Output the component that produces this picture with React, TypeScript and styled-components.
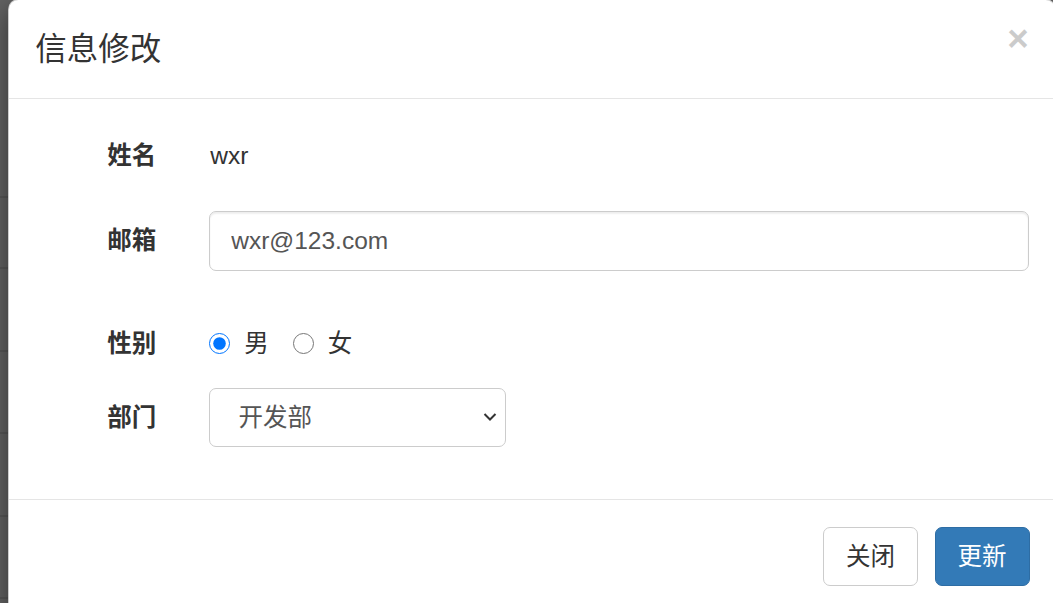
import React from "react";
import styled, { createGlobalStyle } from "styled-components";

const GlobalStyle = createGlobalStyle`
  html, body { margin: 0; padding: 0; }
  body {
    font-family: "Liberation Sans", "Noto Sans CJK SC", sans-serif;
    color: #333;
    overflow: hidden;
  }
  * { box-sizing: border-box; }
`;

const Backdrop = styled.div`
  display: flex;
  align-items: flex-start;
  width: 1053px;
  height: 603px;
  overflow: hidden;
  background: #636363;
`;

const PageBehind = styled.div`
  flex: 0 0 8px;
  display: flex;
  flex-direction: column;
  height: 603px;
`;

const BehindRow = styled.div<{ $h: number }>`
  flex: 0 0 ${(p) => p.$h}px;
  border-bottom: 2px solid #585858;
`;

const Modal = styled.div`
  flex: 0 0 1048px;
  margin-top: -1px;
  background: #fff;
  border: 1.75px solid rgba(0, 0, 0, 0.2);
  border-radius: 10.5px;
  box-shadow: 0 8.75px 26.25px rgba(0, 0, 0, 0.5);
  display: flex;
  flex-direction: column;
`;

const Header = styled.div`
  display: flex;
  align-items: flex-start;
  justify-content: space-between;
  padding: 26.75px 26.25px 26.25px;
  border-bottom: 1.75px solid #e5e5e5;
`;

const Title = styled.h4`
  margin: 0;
  font-size: 31.5px;
  font-weight: 400;
  line-height: 45px;
  color: #333;
`;

const Close = styled.button`
  margin-top: -6px;
  padding: 0;
  border: 0;
  background: transparent;
  font-family: "Liberation Sans", sans-serif;
  font-size: 36.75px;
  font-weight: 700;
  line-height: 1;
  color: #000;
  opacity: 0.2;
  cursor: pointer;
`;

const Body = styled.div`
  display: flex;
  flex-direction: column;
  padding: 26.25px 26.25px 52px;
`;

const FormRow = styled.div<{ $mt?: number }>`
  display: flex;
  align-items: center;
  min-height: 59.5px;
  margin-top: ${(p) => p.$mt ?? 0}px;
`;

const Label = styled.label`
  flex: 0 0 121px;
  margin-right: 53px;
  text-align: right;
  font-size: 24.5px;
  font-weight: 700;
  line-height: 35px;
  color: #333;
`;

const StaticText = styled.div`
  padding-left: 1px;
  font-size: 24.5px;
  line-height: 35px;
  color: #333;
`;

const TextInput = styled.input`
  flex: 1;
  height: 59.5px;
  padding: 10.5px 21px;
  font-family: inherit;
  font-size: 24.5px;
  line-height: 35px;
  color: #555;
  background: #fff;
  border: 1.75px solid #ccc;
  border-radius: 7px;
  box-shadow: inset 0 1.75px 1.75px rgba(0, 0, 0, 0.075);
  outline: none;
`;

const RadioGroup = styled.div`
  display: flex;
  align-items: center;
  gap: 24px;
`;

const RadioLabel = styled.label`
  display: inline-flex;
  align-items: center;
  gap: 14px;
  font-size: 24.5px;
  line-height: 35px;
  color: #333;
`;

const Radio = styled.input`
  width: 21px;
  height: 21px;
  margin: 0;
`;

const SelectWrap = styled.div`
  position: relative;
  width: 297px;
  height: 59.5px;
`;

const Select = styled.select`
  appearance: none;
  width: 100%;
  height: 100%;
  padding: 0 40px 0 28.25px;
  font-family: inherit;
  font-size: 24.5px;
  color: #555;
  background: #fff;
  border: 1.75px solid #ccc;
  border-radius: 7px;
  outline: none;
`;

const Chevron = styled.svg`
  position: absolute;
  left: 274px;
  top: 24px;
  pointer-events: none;
`;

const Footer = styled.div`
  display: flex;
  justify-content: flex-end;
  gap: 16.5px;
  padding: 26.25px 25.5px 26.25px 26.25px;
  border-top: 1.75px solid #e5e5e5;
`;

const Button = styled.button<{ $primary?: boolean }>`
  height: 59.5px;
  padding: 10.5px 22px;
  font-family: inherit;
  font-size: 24.5px;
  line-height: 35px;
  border-radius: 7px;
  border: 1.75px solid ${(p) => (p.$primary ? "#2e6da4" : "#ccc")};
  background: ${(p) => (p.$primary ? "#337ab7" : "#fff")};
  color: ${(p) => (p.$primary ? "#fff" : "#333")};
  cursor: pointer;
`;

const behindRows = [198, 71, 83, 82, 83, 82, 20];

export default function App() {
  return (
    <>
      <GlobalStyle />
      <Backdrop>
        <PageBehind>
          {behindRows.map((h, i) => (
            <BehindRow key={i} $h={h} />
          ))}
        </PageBehind>
        <Modal>
          <Header>
            <Title>信息修改</Title>
            <Close aria-label="Close">×</Close>
          </Header>
          <Body>
            <FormRow>
              <Label>姓名</Label>
              <StaticText>wxr</StaticText>
            </FormRow>
            <FormRow $mt={26.25}>
              <Label>邮箱</Label>
              <TextInput type="text" defaultValue="wxr@123.com" />
            </FormRow>
            <FormRow $mt={42.75}>
              <Label>性别</Label>
              <RadioGroup>
                <RadioLabel>
                  <Radio type="radio" name="gender" defaultChecked />
                  男
                </RadioLabel>
                <RadioLabel>
                  <Radio type="radio" name="gender" />
                  女
                </RadioLabel>
              </RadioGroup>
            </FormRow>
            <FormRow $mt={15}>
              <Label>部门</Label>
              <SelectWrap>
                <Select defaultValue="dev">
                  <option value="dev">开发部</option>
                  <option value="test">测试部</option>
                </Select>
                <Chevron width="14" height="10" viewBox="0 0 14 10">
                  <path d="M1.5 2 L7 7.5 L12.5 2" fill="none" stroke="#333" strokeWidth="2" />
                </Chevron>
              </SelectWrap>
            </FormRow>
          </Body>
          <Footer>
            <Button type="button">关闭</Button>
            <Button type="button" $primary>
              更新
            </Button>
          </Footer>
        </Modal>
      </Backdrop>
    </>
  );
}
